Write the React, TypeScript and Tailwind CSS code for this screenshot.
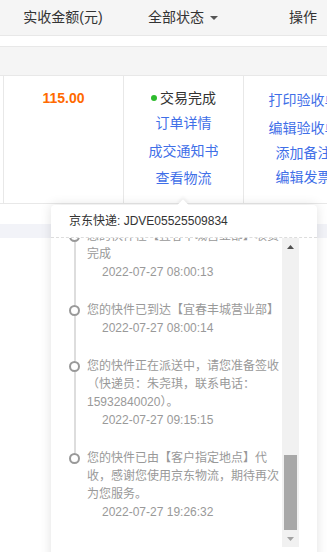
import React from "react";

type Step = { lines: string; time: string };

const steps: Step[] = [
  { lines: "您的快件在【宜春丰城营业部】收货完成", time: "2022-07-27 08:00:13" },
  { lines: "您的快件已到达【宜春丰城营业部】", time: "2022-07-27 08:00:14" },
  { lines: "您的快件正在派送中，请您准备签收（快递员：朱尧琪，联系电话：15932840020）。", time: "2022-07-27 09:15:15" },
  { lines: "您的快件已由【客户指定地点】代收，感谢您使用京东物流，期待再次为您服务。", time: "2022-07-27 19:26:32" },
];

function Timeline() {
  return (
    <div className="-mt-[11px] flex flex-col">
      {steps.map((s, i) => {
        const last = i === steps.length - 1;
        return (
          <div key={i} className="flex">
            <div className="ml-[18px] flex w-[11px] shrink-0 flex-col items-center">
              <div className={i === 0 ? "h-[4px]" : "h-[4px] w-[2px] bg-[#dddddd]"} />
              <div className="size-[11px] shrink-0 rounded-full border-2 border-[#999999] bg-white" />
              {!last && <div className="w-[2px] flex-1 bg-[#dddddd]" />}
            </div>
            <div className={`ml-[7px] flex-1 text-[12px] leading-[18px] text-[#999999] ${last ? "" : "pb-5"}`}>
              <p>{s.lines}</p>
              <p className="pl-[15px]">{s.time}</p>
            </div>
          </div>
        );
      })}
    </div>
  );
}

function Scrollbar() {
  return (
    <div className="flex w-[17px] shrink-0 flex-col bg-[#f1f1f1]">
      <div className="flex h-[17px] items-center justify-center">
        <svg width="7" height="4" viewBox="0 0 7 4" aria-hidden>
          <path d="M3.5 0 L7 4 L0 4 Z" fill="#505050" />
        </svg>
      </div>
      <div className="flex flex-1 flex-col justify-end">
        <div className="mx-[2px] h-[75px] bg-[#a8a8a8]" />
      </div>
      <div className="flex h-[17px] items-center justify-center">
        <svg width="7" height="4" viewBox="0 0 7 4" aria-hidden>
          <path d="M0 0 L7 0 L3.5 4 Z" fill="#a3a3a3" />
        </svg>
      </div>
    </div>
  );
}

function LogisticsPopover() {
  return (
    <div className="absolute left-[51px] top-[205px] w-[266px] rounded bg-white pb-4 shadow-[0_0_12px_rgba(0,0,0,0.12)]">
      <div className="absolute -top-[4px] left-[128px] size-2 rotate-45 bg-white shadow-[-2px_-2px_3px_rgba(0,0,0,0.05)]" />
      <div className="relative flex h-[33px] items-center border-b border-dashed border-[#dddddd] px-[18px] text-[12px] text-[#333333]">
        京东快递: JDVE05525509834
      </div>
      <div className="flex h-[309px] pr-[18px]">
        <div className="flex-1 overflow-hidden">
          <Timeline />
        </div>
        <Scrollbar />
      </div>
    </div>
  );
}

export default function App() {
  const link = "text-[14px] leading-[20px] text-[#3f6fe8]";
  return (
    <div className="relative h-[552px] w-[327px] overflow-hidden bg-white font-['Liberation_Sans','Noto_Sans_CJK_SC',sans-serif]">
      <div className="w-[400px]">
        <div className="grid h-[36px] grid-cols-[3px_120px_120px_120px] items-center border-b border-[#e8e8e8] bg-[#f5f5f5] text-[14px] text-[#333333]">
          <span />
          <span className="text-center">实收金额(元)</span>
          <span className="flex items-center justify-center gap-[6px]">
            全部状态
            <svg width="8" height="4" viewBox="0 0 8 4" aria-hidden>
              <path d="M0 0 L8 0 L4 4 Z" fill="#555555" />
            </svg>
          </span>
          <span className="text-center">操作</span>
        </div>
        <div className="h-[11px] border-b border-[#e8e8e8]" />
        <div className="h-[29px] border-b border-[#e8e8e8] bg-[#f5f5f5]" />
        <div className="grid h-[128px] grid-cols-[3px_120px_120px_120px] border-b border-[#e8e8e8]">
          <div />
          <div className="border-l border-[#e8e8e8] pt-[12px] text-center text-[14px] font-bold leading-[20px] text-[#ff6a00]">
            115.00
          </div>
          <div className="flex flex-col items-center border-l border-[#e8e8e8] pt-[12px]">
            <span className="flex items-center gap-[3px] text-[14px] leading-[20px] text-[#333333]">
              <span className="size-[6px] rounded-full bg-[#2dbb2d]" />
              交易完成
            </span>
            <span className={`mt-[5px] ${link}`}>订单详情</span>
            <span className={`mt-[8px] ${link}`}>成交通知书</span>
            <span className={`mt-[7px] ${link}`}>查看物流</span>
          </div>
          <div className="flex flex-col items-center border-l border-[#e8e8e8] pt-[14px]">
            <span className={link}>打印验收单</span>
            <span className={`mt-[8px] ${link}`}>编辑验收单</span>
            <span className={`mt-[5px] ${link}`}>添加备注</span>
            <span className={`mt-[4px] ${link}`}>编辑发票</span>
          </div>
        </div>
        <div className="h-[20px]" />
        <div className="h-[14px] bg-[#f2f3f8]" />
      </div>
      <LogisticsPopover />
    </div>
  );
}
